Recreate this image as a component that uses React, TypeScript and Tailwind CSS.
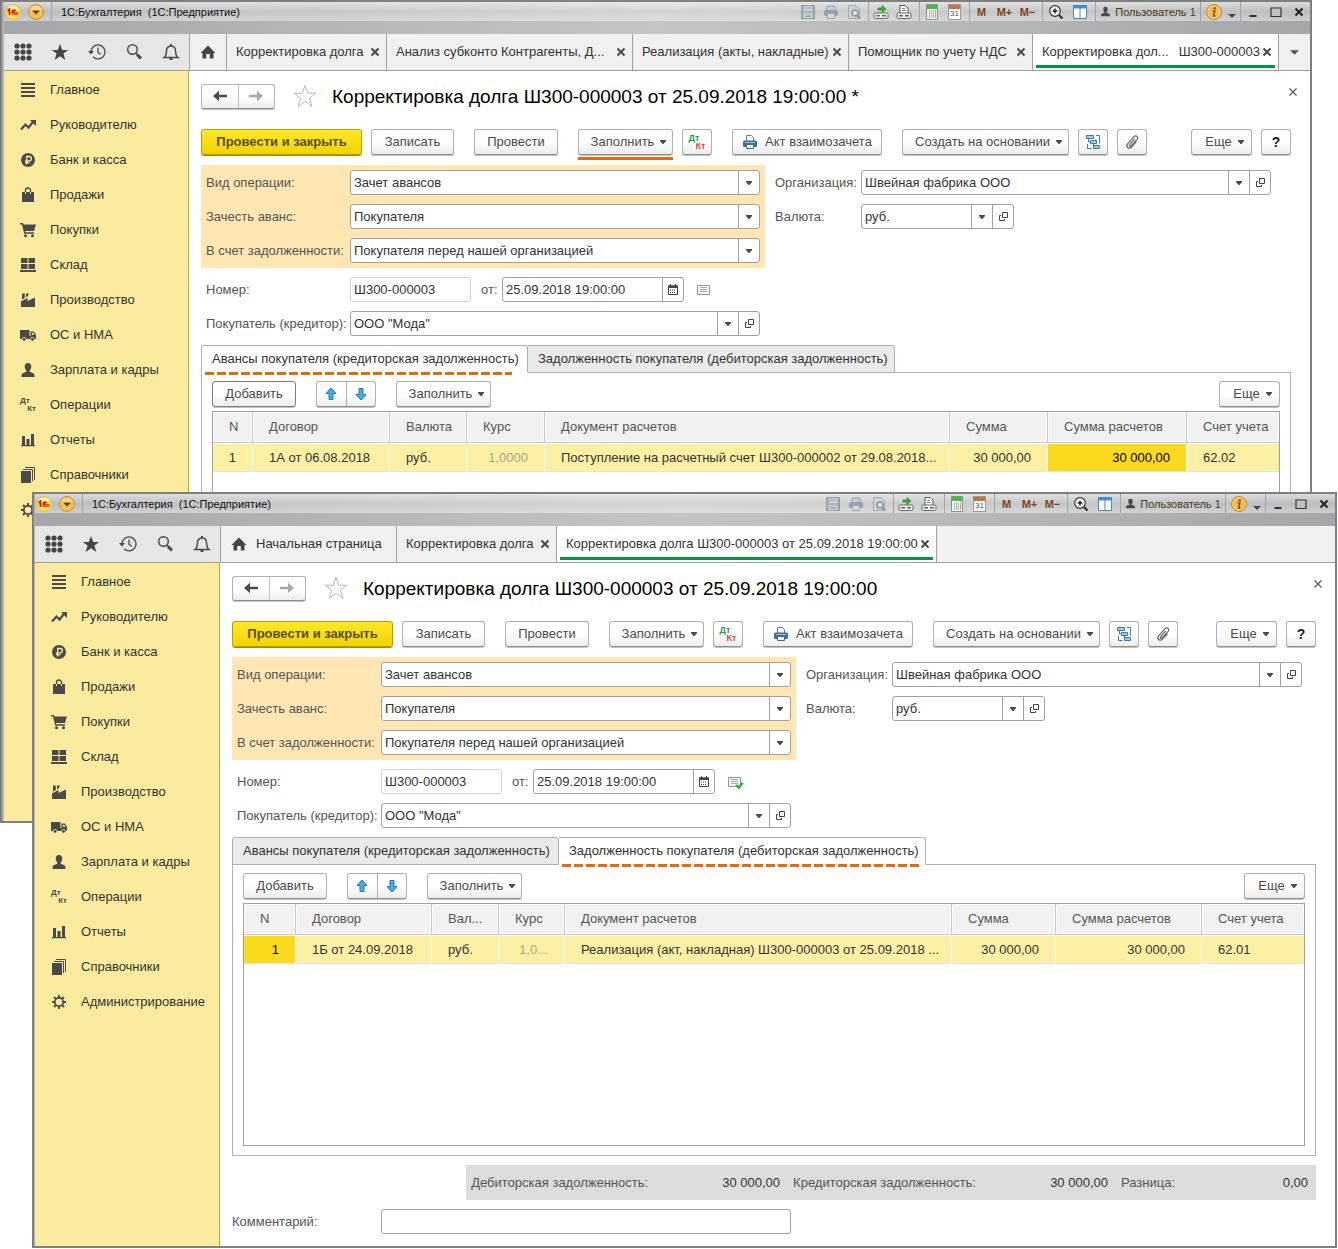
import React, { useId } from "react";

type IconProps = { className?: string };

/* ---------- small drawings ---------- */

const Caret = ({ className = "" }: IconProps) => (
  <svg viewBox="0 0 6 4" preserveAspectRatio="none" className={`h-[4px] w-[6px] shrink-0 ${className}`} aria-hidden="true">
    <path d="M0 0h6v1L3.500 4h-1L0 1z" fill="#4a4a4a" />
  </svg>
);

const OpenIcon = () => (
  <svg viewBox="0 0 11 11" className="size-[11px]" fill="none" stroke="#444" aria-hidden="true">
    <path d="M4.500 1.500h5v5h-5z" />
    <path d="M3 4.500H1.500v5h5V8" />
  </svg>
);

const Logo = () => (
  <svg viewBox="0 0 16 16" className="size-4" aria-hidden="true">
    <circle cx="8" cy="8" r="7.500" fill="#fbe04a" stroke="#d9c35a" />
    <ellipse cx="8" cy="4.500" rx="5" ry="2.800" fill="#fff6a8" />
    <path d="M2.500 6.800 4.500 5.300v5.700" fill="none" stroke="#d8121a" strokeWidth="1.700" />
    <path d="M10.900 6.500A2.300 2.300 0 1 0 9 10.300h4.500M10 7.800A1 1 0 1 0 9 8.700h4.500" fill="none" stroke="#d8121a" strokeWidth="1.100" />
  </svg>
);

const RoundArrow = () => (
  <svg viewBox="0 0 16 16" className="size-4" aria-hidden="true">
    <circle cx="8" cy="8" r="7.500" fill="#f8bd55" stroke="#c98f35" />
    <ellipse cx="8" cy="5" rx="5.500" ry="3" fill="#fcd58b" />
    <path d="M4 6.500h8L8 10.500z" fill="#5d4524" />
  </svg>
);

const SaveIcon = () => (
  <svg viewBox="0 0 16 16" className="size-4" aria-hidden="true">
    <path d="M1.500 1.500h13v13h-13z" fill="#a9b3bc" stroke="#8c98a3" />
    <path d="M4 2h8v5H4z" fill="#cdd2d6" />
    <path d="M4 9.500h8V14H4z" fill="#d8dcdf" />
    <path d="M5 11h6M5 12.500h6M5 4h6" stroke="#94a0aa" />
  </svg>
);

const PrintFaded = () => (
  <svg viewBox="0 0 16 16" className="size-4" aria-hidden="true">
    <path d="M4 2h8v5H4z" fill="#c9ced2" stroke="#98a3ad" />
    <rect x="1" y="6" width="14" height="6" rx="1.500" fill="#94a2af" />
    <path d="M4.500 9.500h7v5h-7z" fill="#d6dadd" stroke="#98a3ad" />
  </svg>
);

const PreviewFaded = () => (
  <svg viewBox="0 0 16 16" className="size-4" aria-hidden="true">
    <path d="M2.500 1.500H10l3.500 3.500v9.500h-11z" fill="#cfd3d6" stroke="#a1a9b0" />
    <circle cx="9" cy="9" r="3" fill="#dfe3e6" stroke="#8795a2" strokeWidth="1.600" />
    <path d="m11 11.500 3 3" stroke="#8795a2" strokeWidth="2" />
  </svg>
);

const LinkIn = () => (
  <svg viewBox="0 0 16 16" className="size-4" aria-hidden="true">
    <path d="M5 4h4V1.500L13 5 9 8.500V6H5z" fill="#2eb82e" stroke="#187518" strokeWidth=".6" />
    <rect x="1" y="9" width="14" height="5.500" rx="1.500" fill="#f0f0f0" stroke="#666" />
    <path d="M3 11.700h4M9 11.700h4" stroke="#666" strokeWidth="1.400" />
  </svg>
);

const LinkOut = () => (
  <svg viewBox="0 0 16 16" className="size-4" aria-hidden="true">
    <path d="M4 1.500h5.500L12 4v6H4z" fill="#fff" stroke="#4f5a66" />
    <path d="M6 4.500h3M6 6.500h4" stroke="#7a8794" />
    <rect x="1" y="9" width="14" height="5.500" rx="1.500" fill="#f0f0f0" stroke="#666" />
    <path d="M3 11.700h4M9 11.700h4" stroke="#666" strokeWidth="1.400" />
  </svg>
);

const CalcIcon = () => (
  <svg viewBox="0 0 16 16" className="size-4" aria-hidden="true">
    <path d="M2.500.500h11v15h-11z" fill="#eef3ee" stroke="#7f9a84" />
    <path d="M3 1h10v4H3z" fill="#46b84e" />
    <path d="M5.500 6.500v8M7.500 6.500v8" stroke="#777" strokeDasharray="1 1" />
    <path d="M9.500 6.500v8" stroke="#777" strokeDasharray="1 1" />
    <path d="M11.500 6.500v8" stroke="#d03c30" strokeDasharray="1 1" />
  </svg>
);

const DayIcon = () => (
  <span className="flex h-4 w-[13px] flex-col border border-[#9a9a9a] bg-white" aria-hidden="true">
    <span className="h-1 shrink-0 bg-[#c4743c]" />
    <span className="text-center text-[8px] leading-[10px] text-[#45586b]">31</span>
  </span>
);

const ZoomIcon = () => (
  <svg viewBox="0 0 16 16" className="size-4" fill="none" aria-hidden="true">
    <circle cx="7" cy="7" r="5.300" fill="#fafafa" stroke="#333" strokeWidth="1.200" />
    <path d="M4.500 7h5M7 4.500v5" stroke="#222" strokeWidth="1.500" />
    <path d="m11 11 3.500 3.500" stroke="#333" strokeWidth="2.200" />
  </svg>
);

const PanesIcon = () => (
  <svg viewBox="0 0 16 16" className="size-4" aria-hidden="true">
    <path d="M1.500 1.500h13v13h-13z" fill="#fff" stroke="#4a84b8" />
    <path d="M1 1h14v3.500H1z" fill="#3c8ddc" />
    <path d="M8 4v10.500" stroke="#6c7f90" />
  </svg>
);

const UserIcon = ({ className = "" }: IconProps) => (
  <svg viewBox="0 0 16 16" className={className} fill="#4a4a4a" aria-hidden="true">
    <path d="M8 1c2.300 0 3.300 1.600 3.300 3.600S10 8.500 9.500 9c0 .8.500 1 2 1.400 2 .5 3 1.300 3 3.100V15h-13v-1.500c0-1.800 1-2.600 3-3.100 1.500-.4 2-.6 2-1.400-.5-.5-1.800-2.400-1.800-4.400S5.700 1 8 1z" />
  </svg>
);

const InfoIcon = () => (
  <svg viewBox="0 0 16 16" className="size-4" aria-hidden="true">
    <circle cx="8" cy="8" r="7.500" fill="#f6bb4e" stroke="#b98939" />
    <circle cx="8" cy="8" r="6" fill="none" stroke="#fbd78d" />
    <circle cx="8.700" cy="4.200" r="1.200" fill="#6b5a3c" />
    <path d="M6.500 7h2.300L7.500 12H9.500" fill="none" stroke="#6b5a3c" strokeWidth="1.500" />
  </svg>
);

const StarOutline = () => (
  <svg viewBox="0 0 24 24" className="size-6" fill="none" stroke="#b4bac2" aria-hidden="true">
    <path d="M12 1.500l2.700 7.700h8.300l-6.600 5 2.500 8.200-6.900-5-6.900 5 2.500-8.200-6.600-5h8.300z" />
  </svg>
);

const ArrowIcon = ({ className = "" }: IconProps) => (
  <svg viewBox="0 0 14 12" className={`h-3 w-[14px] ${className}`} fill="currentColor" aria-hidden="true">
    <path d="M0 6 6 .8V4.800h8v2.400H6v4z" />
  </svg>
);

const BlueArrow = ({ className = "" }: IconProps) => (
  <svg viewBox="0 0 12 14" className={`h-[14px] w-3 ${className}`} aria-hidden="true">
    <path d="M6 1l5 5.500H8V12.500H4V6.500H1z" fill="#42aeea" stroke="#2479ad" />
  </svg>
);

const PrinterIcon = () => (
  <svg viewBox="0 0 16 16" className="size-4" aria-hidden="true">
    <path d="M4.500 1.500h5l2 2V8h-7z" fill="#fff" stroke="#6a7c8e" />
    <rect x="1" y="6.500" width="14" height="6.500" rx="1.500" fill="#3d6c98" />
    <path d="M3 8.500h10" stroke="#9fc0dc" />
    <path d="M4.500 10.500h7v4h-7z" fill="#fff" stroke="#3d6c98" />
  </svg>
);

const StructureIcon = () => (
  <svg viewBox="0 0 16 16" className="size-4" fill="none" stroke="#3f78a8" aria-hidden="true">
    <path d="M1.500 1.500h7v3h-7zM5.500 6.500h6v3h-6zM8.500 11.500h6v3h-6z" fill="#a9cae6" />
    <path d="M3.500 5v3h2M8.500 10v3M2.500 10v4.500h4M11 1.500h3.500v8" />
  </svg>
);

const ClipIcon = () => (
  <svg viewBox="0 0 16 16" className="size-4" fill="none" stroke="#666" strokeWidth="1.200" aria-hidden="true">
    <path d="M10.800 4.800 5.600 10.600c-.9 1.100.6 2.400 1.500 1.400l6-6.600c1.900-2.200-1-4.900-3-2.700L3.600 9.800c-2.300 2.700 1.300 6 3.800 3.300L12.500 7.600" />
  </svg>
);

const CalendarIcon = () => (
  <svg viewBox="0 0 10 11" className="h-[11px] w-[10px]" aria-hidden="true">
    <path d="M.500 2h9v8.500h-9z" fill="#fff" stroke="#444" />
    <path d="M0 1.500h10V4H0z" fill="#444" />
    <path d="M2.500 0v2M7.500 0v2" stroke="#444" />
    <path d="M2 6h6M2 8.500h6" stroke="#444" strokeDasharray="1 1" />
  </svg>
);

const ListDoc = ({ checked }: { checked: boolean }) => (
  <svg viewBox="0 0 16 14" className="h-[14px] w-4" aria-hidden="true">
    <path d="M.500 2.500h12v9H.500z" fill="#f6f9fb" stroke="#8598a8" />
    <path d="M3 4.500h7M3 6.500h7M3 8.500h7" stroke="#a0abb5" />
    {checked && <path d="m8 10 2.700 2.800 4-5" fill="none" stroke="#22b02d" strokeWidth="2.200" />}
  </svg>
);

const HomeIcon = () => (
  <svg viewBox="0 0 16 14" className="h-[14px] w-4 shrink-0" fill="#444" aria-hidden="true">
    <path d="M8 .5 15.500 8H13.500v5.500H9.800V9H6.200v4.500H2.500V8H.500z" />
  </svg>
);

const DtKt = () => (
  <span className="flex w-4 flex-col text-[8px] leading-2 font-bold text-[#4a4a4a]" aria-hidden="true">
    <span>Дт</span>
    <span className="text-right">Кт</span>
  </span>
);

const DtKtColored = () => (
  <span className="flex w-[17px] flex-col text-[9px] leading-2 font-bold" aria-hidden="true">
    <span className="text-left text-[#1f9a4c]">Дт</span>
    <span className="text-right text-[#dd4a4a]">Кт</span>
  </span>
);

/* ---------- section icons ---------- */

const S = ({ children }: { children: React.ReactNode }) => (
  <svg viewBox="0 0 16 16" className="size-4" fill="#4a4a4a" aria-hidden="true">
    {children}
  </svg>
);

const sections: { label: string; icon: React.ReactNode }[] = [
  { label: "Главное", icon: <S><path d="M1 1h14v2H1zM1 5h14v2H1zM1 9h14v2H1zM1 13h14v2H1z" /></S> },
  { label: "Руководителю", icon: <S><path d="M1 12.500 5.500 7.500 8.500 10.500 13 5" fill="none" stroke="#4a4a4a" strokeWidth="2.200" /><path d="M10 3h6v6z" /></S> },
  { label: "Банк и касса", icon: <S><circle cx="8" cy="8" r="7" /><path d="M6.700 12.500V4.500h2.500a2 2 0 0 1 0 4.300H5M5 10.700h4.500" fill="none" stroke="#fbeb9e" strokeWidth="1.300" /></S> },
  { label: "Продажи", icon: <S><path d="M2 5h12v10H2z" /><path d="M5.500 7V3.500a2.500 2.500 0 0 1 5 0V7" fill="none" stroke="#4a4a4a" strokeWidth="1.400" /><path d="M5.500 5v2M10.500 5v2" stroke="#fbeb9e" /></S> },
  { label: "Покупки", icon: <S><path d="M0 1h3l.6 1.500H16L14 9H5l.4 1.200H14v1.500H4.200L2 2.500H0z" /><circle cx="5.500" cy="13.800" r="1.500" /><circle cx="12.500" cy="13.800" r="1.500" /></S> },
  { label: "Склад", icon: <S><path d="M1 1h6.500v5H1zM8.500 1H15v5H8.500zM1 7h6.500v5H1zM8.500 7H15v5H8.500zM0 13h16v2H0z" /></S> },
  { label: "Производство", icon: <S><path d="M1 15V9.500L7.500 6v3L15 5.500V15zM2 1.500h2.800V6L2 7.500zM6 1.500h3L7.500 4.500 6 5.300z" /></S> },
  { label: "ОС и НМА", icon: <S><path d="M0 3h9.500v9H0zM10.500 4.500H14L16 8v4h-5.500z" /><path d="M11.800 5.800h1.600l1.200 2h-2.800z" fill="#fbeb9e" /><path d="M9 9h3v3H9z" /><circle cx="4" cy="12.300" r="1.900" stroke="#fbeb9e" strokeWidth=".8" /><circle cx="12.500" cy="12.300" r="1.900" stroke="#fbeb9e" strokeWidth=".8" /></S> },
  { label: "Зарплата и кадры", icon: <UserIcon className="size-4" /> },
  { label: "Операции", icon: <DtKt /> },
  { label: "Отчеты", icon: <S><path d="M2 4h3v9H2zM6.500 7h3v6h-3zM11 2h3v11h-3zM1 13h14v1.200H1z" /></S> },
  { label: "Справочники", icon: <S><path d="M1 4h10v12H1z" /><path d="M3 2.500h9.500V14M5 .500h9.500V13" fill="none" stroke="#4a4a4a" /></S> },
  {
    label: "Администрирование",
    icon: (
      <S>
        <circle cx="8" cy="8" r="4.200" fill="none" stroke="#4a4a4a" strokeWidth="1.800" />
        <path d="M8 1v2.500M8 12.500V15M1 8h2.500M12.500 8H15M3 3l1.800 1.800M11.200 11.200 13 13M13 3l-1.800 1.800M4.800 11.200 3 13" stroke="#4a4a4a" strokeWidth="2" />
      </S>
    ),
  },
];

/* ---------- controls ---------- */

const face = "rounded-[3px] border bg-linear-to-b from-white from-50% to-[#ececec] shadow-[0_1px_0_#c4c4c4] text-[#4a4a4a]";
const edge = "border-[#b0b0b0] border-b-[#8f8f8f]";

function Btn({ className = "", children, label, focused }: { className?: string; children: React.ReactNode; label?: string; focused?: boolean }) {
  return (
    <button type="button" aria-label={label} className={`flex h-[26px] shrink-0 items-center justify-center whitespace-nowrap ${face} ${focused ? "border-[#7c7c7c]" : edge} ${className}`}>
      {children}
    </button>
  );
}

function MenuBtn({ className = "", children }: { className?: string; children: React.ReactNode }) {
  return (
    <Btn className={`gap-1.5 pl-1.5 ${className}`}>
      {children}
      <Caret />
    </Btn>
  );
}

function Combo({ id, value, open, className = "" }: { id: string; value: string; open?: boolean; className?: string }) {
  return (
    <div className={`flex h-[25px] rounded-[3px] border border-[#a0a0a0] bg-white ${className}`}>
      <div className="relative min-w-0 flex-1">
        <select id={id} className="size-full appearance-none bg-transparent pr-6 pl-[3px] text-[#333] outline-none">
          <option>{value}</option>
        </select>
        <span className="pointer-events-none absolute inset-y-0 right-0 flex w-[21px] items-center justify-center border-l border-[#a0a0a0]">
          <Caret />
        </span>
      </div>
      {open && (
        <button type="button" aria-label="Открыть" className="flex w-[21px] items-center justify-center border-l border-[#a0a0a0]">
          <OpenIcon />
        </button>
      )}
    </div>
  );
}

function Row({ label, value, open, labelClass, comboClass }: { label: string; value: string; open?: boolean; labelClass: string; comboClass: string }) {
  const id = useId();
  return (
    <div className="flex items-center">
      <label htmlFor={id} className={`shrink-0 whitespace-nowrap ${labelClass}`}>{label}</label>
      <Combo id={id} value={value} open={open} className={comboClass} />
    </div>
  );
}

function TitleSep() {
  return <span className="h-[19px] w-px shrink-0 bg-[#a2a2a4]" />;
}

function TitleBar() {
  const tool = "flex w-[23px] items-center justify-center";
  const mem = "flex w-[23px] items-center justify-center text-[11px] font-bold text-[#7a4524]";
  return (
    <header className="bg-linear-to-r from-[#a6a6aa] via-[#c4c6c3] to-[#a6a6aa] pb-[13px]">
      <div className="flex h-[19px] items-center bg-linear-to-b from-white/60 via-white/25 to-white/45 pl-px text-[11px]">
        <Logo />
        <button type="button" aria-label="Меню программы" className="ml-[7px]"><RoundArrow /></button>
        <span className="ml-[7px] flex"><TitleSep /></span>
        <span className="ml-[9px] whitespace-pre text-[#111]">{"1С:Бухгалтерия  (1С:Предприятие)"}</span>
        <div className="ml-auto flex h-[19px] items-stretch">
          <button type="button" aria-label="Сохранить" className={tool}><SaveIcon /></button>
          <button type="button" aria-label="Печать" className={tool}><PrintFaded /></button>
          <button type="button" aria-label="Просмотр" className={`${tool} mr-[3px]`}><PreviewFaded /></button>
          <TitleSep />
          <button type="button" aria-label="Получить ссылку" className={tool}><LinkIn /></button>
          <button type="button" aria-label="Перейти по ссылке" className={`${tool} mr-1`}><LinkOut /></button>
          <TitleSep />
          <button type="button" aria-label="Калькулятор" className={tool}><CalcIcon /></button>
          <button type="button" aria-label="Календарь" className={`${tool} mr-[3px]`}><DayIcon /></button>
          <TitleSep />
          <button type="button" className={mem}>M</button>
          <button type="button" className={mem}>M+</button>
          <button type="button" className={`${mem} mr-[3px]`}>M−</button>
          <TitleSep />
          <button type="button" aria-label="Масштаб" className="flex w-[26px] items-center justify-center"><ZoomIcon /></button>
          <button type="button" aria-label="Панели" className="mr-1 flex w-[22px] items-center justify-center"><PanesIcon /></button>
          <TitleSep />
          <button type="button" className="flex w-[104px] items-center justify-center gap-1 whitespace-nowrap text-[#4a3a1c]">
            <UserIcon className="size-[11px]" />
            Пользователь 1
          </button>
          <TitleSep />
          <button type="button" aria-label="Справка" className="flex w-[39px] items-center justify-center gap-1.5">
            <InfoIcon />
            <svg viewBox="0 0 8 4" className="mt-2 h-1 w-2" aria-hidden="true"><path d="M0 0h8L4 4z" fill="#444" /></svg>
          </button>
          <TitleSep />
          <button type="button" aria-label="Свернуть" className={tool}><svg viewBox="0 0 12 12" className="size-3"><path d="M2.500 9h7v2h-7z" fill="#333" /></svg></button>
          <button type="button" aria-label="Развернуть" className={tool}><svg viewBox="0 0 12 12" className="size-3"><path d="M1 2h10v8.500H1z" fill="none" stroke="#333" strokeWidth="1.200" /></svg></button>
          <button type="button" aria-label="Закрыть" className={tool}><svg viewBox="0 0 12 12" className="size-3"><path d="m2.500 2.500 7 7m0-7-7 7" stroke="#222" strokeWidth="2" /></svg></button>
        </div>
      </div>
    </header>
  );
}

type TabDef = { text: React.ReactNode; width: string; active?: boolean; home?: boolean };

function TabBar({ tabs, more }: { tabs: TabDef[]; more?: boolean }) {
  const tool = "flex w-[37px] items-center justify-center";
  return (
    <nav className="flex h-[37px] border-b border-[#a0a0a0] bg-[#f0f0f0] text-[#333]">
      <div className="flex w-[186px] shrink-0 border-r border-[#a0a0a0] bg-[#e6e6e6]">
        <button type="button" aria-label="Меню функций" className={tool}>
          <svg viewBox="0 0 18 18" className="size-[18px]" fill="#444">
            {[3, 9, 15].map((y) => [3, 9, 15].map((x) => <circle key={`${x}-${y}`} cx={x} cy={y} r="2.600" />))}
          </svg>
        </button>
        <button type="button" aria-label="Избранное" className={tool}>
          <svg viewBox="0 0 18 18" className="size-[18px]" fill="#444"><path d="M9 1l2.200 5.900h6L12.400 10.600l1.900 6.400L9 13.200 3.700 17l1.900-6.400L.8 6.900h6z" /></svg>
        </button>
        <button type="button" aria-label="История" className={tool}>
          <svg viewBox="0 0 18 18" className="size-[18px]" fill="none" stroke="#4a4a4a" strokeWidth="1.300">
            <path d="M3 9.500A7 7 0 1 1 5 13.800M10 4.500v5l3 1.800" />
            <path d="M0 8h6l-3 3.500z" fill="#4a4a4a" stroke="none" />
          </svg>
        </button>
        <button type="button" aria-label="Поиск" className={tool}>
          <svg viewBox="0 0 18 18" className="size-[18px]" fill="none" stroke="#4a4a4a">
            <circle cx="7.500" cy="6.500" r="4.800" strokeWidth="1.500" />
            <path d="m11 10 2 2" strokeWidth="1.500" />
            <path d="m12 11.500 4 4" strokeWidth="3" />
          </svg>
        </button>
        <button type="button" aria-label="Оповещения" className={tool}>
          <svg viewBox="0 0 18 18" className="size-[18px]" fill="none" stroke="#4a4a4a" strokeWidth="1.400">
            <path d="M2 14.500c2.200-1.500 2.400-3.300 2.400-6C4.400 5 6.500 3 9 3s4.600 2 4.600 5.500c0 2.700.2 4.500 2.400 6z" />
            <path d="M9 1v2M7.500 16h3" strokeWidth="2" />
          </svg>
        </button>
      </div>
      {tabs.map((t, i) => (
        <div key={i} className={`flex shrink-0 border-r border-[#a0a0a0] px-[3px] pb-0.5 ${t.width} ${t.active ? "bg-white" : ""}`}>
          <div className={`flex min-w-0 flex-1 items-center border-b-3 pt-[5px] ${t.active ? "border-[#009646]" : "border-transparent"}`}>
            {t.home ? (
              <button type="button" aria-label="Начальная страница" className="flex items-center gap-[9px] pl-[7px] whitespace-nowrap">
                <HomeIcon />
                {t.text}
              </button>
            ) : (
              <>
                <button type="button" className="flex flex-1 items-center justify-between pl-1.5 whitespace-nowrap">{t.text}</button>
                <button type="button" aria-label="Закрыть вкладку" className="mr-[3px] ml-0.5 shrink-0">
                  <svg viewBox="0 0 10 10" className="size-[10px]"><path d="m1.500 1.500 7 7m0-7-7 7" stroke="#444" strokeWidth="1.900" /></svg>
                </button>
              </>
            )}
          </div>
        </div>
      ))}
      {more && (
        <button type="button" aria-label="Все вкладки" className="flex flex-1 items-center justify-center">
          <svg viewBox="0 0 10 5" className="h-[5px] w-[9px]"><path d="M0 0h10L5 5z" fill="#555" /></svg>
        </button>
      )}
    </nav>
  );
}

/* ---------- document table ---------- */

type Col = { title: string; value: string; width: string; right?: boolean; dim?: boolean; hot?: boolean };

function Grid({ cols, className }: { cols: Col[]; className: string }) {
  return (
    <div className={`border border-[#a0a0a0] bg-white ${className}`}>
      <table className="w-full table-fixed border-separate border-spacing-0">
        <thead>
          <tr className="h-[31px]">
            {cols.map((c, i) => (
              <th key={i} className={`truncate border-b border-[#c8c8c8] bg-[#f1f1f1] px-0 pl-4 text-left font-normal text-[#555] shadow-[inset_0_0_0_1px_#fff] ${i < cols.length - 1 ? "border-r" : ""} ${c.width}`}>
                {c.title}
              </th>
            ))}
          </tr>
        </thead>
        <tbody>
          <tr className="h-[29px]">
            {cols.map((c, i) => (
              <td
                key={i}
                className={`overflow-hidden border-t border-b border-t-white border-b-[#e2e2e2] whitespace-nowrap ${i < cols.length - 1 ? "border-r border-r-white" : ""} ${c.right ? "pr-4 text-right" : "pl-4"} ${c.hot ? "bg-[#fbd91e] text-black" : "bg-[#fcf0a4]"} ${c.dim ? "text-[#a9a48c]" : "text-[#333]"}`}
              >
                {c.value}
              </td>
            ))}
          </tr>
        </tbody>
      </table>
    </div>
  );
}

/* ---------- application window ---------- */

type WindowProps = {
  className: string;
  tabs: TabDef[];
  more?: boolean;
  title: string;
  posted: boolean;
  draft?: boolean;
  activePage: 0 | 1;
  cols: Col[];
  gridClass: string;
};

function Total({ label, value, className }: { label: string; value: string; className: string }) {
  const id = useId();
  return (
    <div className="flex items-center">
      <label htmlFor={id} className="shrink-0 whitespace-nowrap text-[#555]">{label}</label>
      <output id={id} className={`text-right text-[#333] ${className}`}>{value}</output>
    </div>
  );
}

const pages = [
  { text: "Авансы покупателя (кредиторская задолженность)", tab: "w-[327px] rounded-t-[3px]", mark: "right-[15px]" },
  { text: "Задолженность покупателя (дебиторская задолженность)", tab: "w-[367px] rounded-tr-[3px] border-l-0", mark: "right-1.5" },
];

function DocWindow({ className, tabs, more, title, posted, draft, activePage, cols, gridClass }: WindowProps) {
  const id = useId();
  return (
    <section className={`flex min-w-0 flex-col border-2 border-[#7f7f7f] bg-white ${className}`}>
      <TitleBar />
      <TabBar tabs={tabs} more={more} />
      <div className="flex flex-1">
        <aside className="w-[185px] shrink-0 border-r border-[#bfa81c] bg-[#fbeb9e]">
          <ul>
            {sections.map((s) => (
              <li key={s.label}>
                <a href="#" className="flex h-[35px] items-center gap-3.5 pt-0.5 pl-4 whitespace-nowrap text-[#333]">
                  {s.icon}
                  {s.label}
                </a>
              </li>
            ))}
          </ul>
        </aside>

        <main className="flex min-w-0 flex-1 flex-col pt-3 pr-[19px] pb-3 pl-3 text-[#555]">
          <div className="flex h-[26px] items-center">
            <div className={`flex h-[25px] w-[74px] shrink-0 ${face} ${edge}`}>
              <button type="button" aria-label="Назад" className="flex flex-1 items-center justify-center border-r border-[#c4c4c4]"><ArrowIcon /></button>
              <button type="button" aria-label="Вперед" className="flex flex-1 items-center justify-center text-[#aaa]"><ArrowIcon className="rotate-180" /></button>
            </div>
            <button type="button" aria-label="В избранное" className="ml-[18px]"><StarOutline /></button>
            <h1 className="ml-[15px] pt-0.5 text-[19px] leading-6 whitespace-nowrap text-black">{title}</h1>
            <button type="button" aria-label="Закрыть" className="-mr-[7px] mb-2 ml-auto">
              <svg viewBox="0 0 10 10" className="size-[10px]"><path d="m1.500 1.500 7 7m0-7-7 7" stroke="#555" strokeWidth="1.200" /></svg>
            </button>
          </div>

          <div className="mt-5 flex items-start">
            <button type="button" className="h-[26px] w-[161px] shrink-0 rounded-[3px] border border-[#b59f00] bg-linear-to-b from-[#ffe924] to-[#f3d200] text-[13px] font-bold whitespace-nowrap text-[#5a4d1c] shadow-[0_1px_0_#a08c00]">
              Провести и закрыть
            </button>
            <Btn className="ml-[9px] w-[83px]">Записать</Btn>
            <Btn className="ml-5 w-[84px]">Провести</Btn>
            <div className={`ml-5 border-b-3 pb-0.5 ${draft ? "border-[#e36c0a]" : "border-transparent"}`}>
              <MenuBtn className="w-[95px]">Заполнить</MenuBtn>
            </div>
            <Btn className="ml-[9px] w-[30px]" label="Дт/Кт"><DtKtColored /></Btn>
            <Btn className="ml-5 w-[150px] gap-[7px]"><PrinterIcon />Акт взаимозачета</Btn>
            <MenuBtn className="ml-5 w-[167px]">Создать на основании</MenuBtn>
            <Btn className="ml-[9px] w-[30px]" label="Структура подчиненности"><StructureIcon /></Btn>
            <Btn className="ml-[9px] w-[30px]" label="Файлы"><ClipIcon /></Btn>
            <MenuBtn className="ml-auto w-[61px]">Еще</MenuBtn>
            <Btn className="ml-[9px] w-[30px] text-[14px] font-bold"><span className="text-[#222]">?</span></Btn>
          </div>

          <div className="mt-[5px] flex items-start gap-2.5">
            <div className="flex w-[564px] shrink-0 flex-col gap-[9px] bg-[#ffe6b3] p-[5px]">
              <Row label="Вид операции:" value="Зачет авансов" labelClass="w-36" comboClass="min-w-0 flex-1" />
              <Row label="Зачесть аванс:" value="Покупателя" labelClass="w-36" comboClass="min-w-0 flex-1" />
              <Row label="В счет задолженности:" value="Покупателя перед нашей организацией" labelClass="w-36" comboClass="min-w-0 flex-1" />
            </div>
            <div className="flex flex-1 flex-col gap-[9px] py-[5px]">
              <Row label="Организация:" value="Швейная фабрика ООО" open labelClass="w-[86px]" comboClass="w-[410px]" />
              <Row label="Валюта:" value="руб." open labelClass="w-[86px]" comboClass="w-[153px]" />
            </div>
          </div>

          <div className="mt-[9px] flex items-center pl-[5px]">
            <label htmlFor={`${id}-n`} className="w-36 shrink-0">Номер:</label>
            <input id={`${id}-n`} defaultValue="Ш300-000003" className="h-[25px] w-[121px] rounded-[3px] border border-[#d2d2d2] bg-white px-[3px] text-[#333]" />
            <label htmlFor={`${id}-d`} className="ml-2.5 w-[21px]">от:</label>
            <div className="flex h-[25px] w-[182px] rounded-[3px] border border-[#a0a0a0] bg-white">
              <input id={`${id}-d`} defaultValue="25.09.2018 19:00:00" className="min-w-0 flex-1 bg-transparent px-[3px] text-[#333]" />
              <button type="button" aria-label="Выбрать дату" className="flex w-[21px] items-center justify-center border-l border-[#a0a0a0]"><CalendarIcon /></button>
            </div>
            <span className="ml-[13px]"><ListDoc checked={posted} /></span>
          </div>
          <div className="mt-[9px] pl-[5px]">
            <Row label="Покупатель (кредитор):" value={'ООО "Мода"'} open labelClass="w-36" comboClass="w-[410px]" />
          </div>

          <div role="tablist" className="relative z-10 mt-[9px] -mb-px flex">
            {pages.map((p, i) => {
              const on = i === activePage;
              return (
                <button
                  key={p.text}
                  type="button"
                  role="tab"
                  aria-selected={on}
                  className={`relative flex h-7 items-center border border-[#b0b0b0] pl-2.5 whitespace-nowrap text-[#333] ${p.tab} ${on ? "border-b-white bg-white" : "bg-[#eaeaea]"}`}
                >
                  {p.text}
                  {on && (
                    <span className={`absolute -bottom-[3px] left-[3px] h-[3px] bg-[repeating-linear-gradient(90deg,#e36c0a_0_9px,transparent_9px_12px)] ${p.mark}`} />
                  )}
                </button>
              );
            })}
          </div>

          <div className="flex flex-1 flex-col border border-[#b0b0b0] px-2.5 pt-2 pb-[9px]">
            <div className="mb-1 flex">
              <Btn className="w-[84px]" focused={draft}>Добавить</Btn>
              <div className={`ml-5 flex h-[26px] w-[60px] ${face} ${edge}`}>
                <button type="button" aria-label="Вверх" className="flex flex-1 items-center justify-center border-r border-[#b0b0b0]"><BlueArrow /></button>
                <button type="button" aria-label="Вниз" className="flex flex-1 items-center justify-center"><BlueArrow className="rotate-180" /></button>
              </div>
              <MenuBtn className="ml-5 w-[95px]">Заполнить</MenuBtn>
              <MenuBtn className="ml-auto w-[61px]">Еще</MenuBtn>
            </div>
            <Grid cols={cols} className={`flex-1 ${gridClass}`} />
          </div>

          <div className="mt-[9px] ml-auto flex h-[35px] items-center gap-[13px] bg-[#dcdcdc] pr-2 pl-[5px]">
            <Total label="Дебиторская задолженность:" value="30 000,00" className="w-[132px]" />
            <Total label="Кредиторская задолженность:" value="30 000,00" className="w-[132px]" />
            <Total label="Разница:" value="0,00" className="w-[133px]" />
          </div>
          <div className="mt-[9px] flex items-center">
            <label htmlFor={`${id}-c`} className="w-[149px] shrink-0">Комментарий:</label>
            <input id={`${id}-c`} className="h-[25px] w-[410px] rounded-[3px] border border-[#a0a0a0] bg-white px-[3px] text-[#333]" />
          </div>
        </main>
      </div>
    </section>
  );
}

const backTabs: TabDef[] = [
  { text: null, width: "w-[37px]", home: true },
  { text: "Корректировка долга", width: "w-[160px]" },
  { text: "Анализ субконто Контрагенты, Д...", width: "w-[246px]" },
  { text: "Реализация (акты, накладные)", width: "w-[216px]" },
  { text: "Помощник по учету НДС", width: "w-[184px]" },
  { text: (<><span>Корректировка дол...</span><span>Ш300-000003</span></>), width: "w-[246px]", active: true },
];

const frontTabs: TabDef[] = [
  { text: "Начальная страница", width: "w-[176px]", home: true },
  { text: "Корректировка долга", width: "w-[160px]" },
  { text: "Корректировка долга Ш300-000003 от 25.09.2018 19:00:00", width: "w-[380px]", active: true },
];

const backCols: Col[] = [
  { title: "N", value: "1", width: "w-10", right: true },
  { title: "Договор", value: "1А от 06.08.2018", width: "w-[137px]" },
  { title: "Валюта", value: "руб.", width: "w-[77px]" },
  { title: "Курс", value: "1,0000", width: "w-[78px]", right: true, dim: true },
  { title: "Документ расчетов", value: "Поступление на расчетный счет Ш300-000002 от 29.08.2018...", width: "w-auto" },
  { title: "Сумма", value: "30 000,00", width: "w-[98px]", right: true },
  { title: "Сумма расчетов", value: "30 000,00", width: "w-[139px]", right: true, hot: true },
  { title: "Счет учета", value: "62.02", width: "w-[92px]" },
];

const frontCols: Col[] = [
  { title: "N", value: "1", width: "w-[52px]", right: true, hot: true },
  { title: "Договор", value: "1Б от 24.09.2018", width: "w-[136px]" },
  { title: "Вал...", value: "руб.", width: "w-[67px]" },
  { title: "Курс", value: "1,0...", width: "w-[66px]", right: true, dim: true },
  { title: "Документ расчетов", value: "Реализация (акт, накладная) Ш300-000003 от 25.09.2018 ...", width: "w-auto" },
  { title: "Сумма", value: "30 000,00", width: "w-[104px]", right: true },
  { title: "Сумма расчетов", value: "30 000,00", width: "w-[146px]", right: true },
  { title: "Счет учета", value: "62.01", width: "w-[102px]" },
];

export default function App() {
  return (
    <div className="grid min-h-screen grid-cols-1 items-start bg-white font-['Liberation_Sans',Arial,sans-serif] text-[13px] leading-4">
      <DocWindow
        className="col-start-1 row-start-1 mr-[26px] pl-0.5 shadow-[inset_2px_0_0_#b4b4b6]"
        tabs={backTabs}
        more
        title="Корректировка долга Ш300-000003 от 25.09.2018 19:00:00 *"
        posted={false}
        draft
        activePage={0}
        cols={backCols}
        gridClass="min-h-[310px]"
      />
      <DocWindow
        className="z-20 col-start-1 row-start-1 mt-[492px] mr-px ml-8 pl-px shadow-[inset_1px_0_0_#b4b4b6]"
        tabs={frontTabs}
        title="Корректировка долга Ш300-000003 от 25.09.2018 19:00:00"
        posted
        activePage={1}
        cols={frontCols}
        gridClass="min-h-[243px]"
      />
    </div>
  );
}
